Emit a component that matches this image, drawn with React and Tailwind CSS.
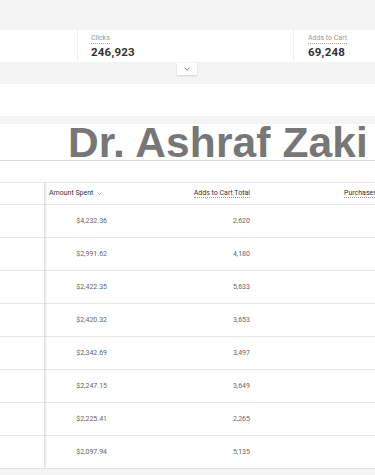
import React from "react";

const rows = [
  ["$4,232.36", "2,620"],
  ["$2,991.62", "4,180"],
  ["$2,422.35", "5,633"],
  ["$2,420.32", "3,653"],
  ["$2,342.69", "3,497"],
  ["$2,247.15", "3,649"],
  ["$2,225.41", "2,265"],
  ["$2,097.94", "5,135"],
];

export default function App() {
  return (
    <div className="w-[375px] h-[475px] overflow-hidden bg-[#f4f4f4]" style={{ fontFamily: "Roboto, 'Liberation Sans', sans-serif" }}>
      {/* top stats */}
      <div className="h-[30px]" />
      <div className="relative flex h-[32px] bg-white">
        <div className="w-[78px] border-r border-[#eeeeee]" />
        <div className="w-[216px] border-r border-[#eeeeee] pl-[13px] pt-[4px] flex flex-col items-start">
          <div className="text-[7px] text-[#999] leading-[9px] border-b border-dotted border-[#aaa]">Clicks</div>
          <div className="mt-[1px] text-[11.5px] font-bold text-[#333] leading-[14px] tracking-[0.2px]">246,923</div>
        </div>
        <div className="flex-1 pl-[14px] pt-[4px] flex flex-col items-start">
          <div className="text-[7px] text-[#999] leading-[9px] border-b border-dotted border-[#aaa]">Adds to Cart</div>
          <div className="mt-[1px] text-[11.5px] font-bold text-[#333] leading-[14px] tracking-[0.2px]">69,248</div>
        </div>
      </div>
      <div className="relative h-[22px]">
        <div className="absolute left-[177px] top-[1px] w-[20px] h-[12px] bg-white shadow-[0_1px_2px_rgba(0,0,0,0.15)] flex items-center justify-center">
          <svg width="6" height="4" viewBox="0 0 6 4"><path d="M0.5 0.7 L3 3.2 L5.5 0.7" fill="none" stroke="#666" strokeWidth="0.9" /></svg>
        </div>
      </div>
      <div className="h-[32px] bg-white" />
      <div className="h-[8px]" />
      {/* title */}
      <div className="h-[37px] bg-white border-b border-[#dcdcdc] overflow-hidden whitespace-nowrap pl-[68px]">
        <span className="text-[42.5px] font-bold text-[#777777] leading-[37px] tracking-[0.1px]" style={{ fontFamily: "'Liberation Sans', Arial, sans-serif" }}>Dr. Ashraf Zaki</span>
      </div>
      <div className="h-[21px] bg-white" />
      {/* table */}
      <div className="relative bg-white border-t border-[#e8e8e8]">
        <div className="flex h-[22px] border-b border-[#e6e6e6] items-center text-[7px] text-[#333] whitespace-nowrap">
          <div className="w-[45px] h-full" />
          <div className="w-[65px] pl-[4px] flex items-center gap-[4px]">
            <span>Amount Spent</span>
            <svg width="5" height="3" viewBox="0 0 5 3"><path d="M0.5 0.5 L2.5 2.5 L4.5 0.5" fill="none" stroke="#888" strokeWidth="0.7" /></svg>
          </div>
          <div className="w-[143px] pr-[3px] text-right">
            <span className="border-b border-dotted border-[#999]">Adds to Cart Total</span>
          </div>
          <div className="flex-1 pl-[91px] overflow-hidden">
            <span className="border-b border-dotted border-[#999]">Purchases</span>
          </div>
        </div>
        {rows.map((r, i) => (
          <div key={i} className="flex h-[33px] border-b border-[#e6e6e6] items-center text-[7px] text-[#666] whitespace-nowrap">
            <div className="w-[45px] h-full" />
            <div className="w-[65px] pr-[3px] text-right">{r[0]}</div>
            <div className="w-[143px] pr-[3px] text-right">{r[1]}</div>
            <div className="flex-1" />
          </div>
        ))}
        <div className="absolute left-[44px] top-0 bottom-0 w-[3px] bg-gradient-to-r from-[#dcdcdc] to-[rgba(230,230,230,0)]" />
      </div>
    </div>
  );
}
